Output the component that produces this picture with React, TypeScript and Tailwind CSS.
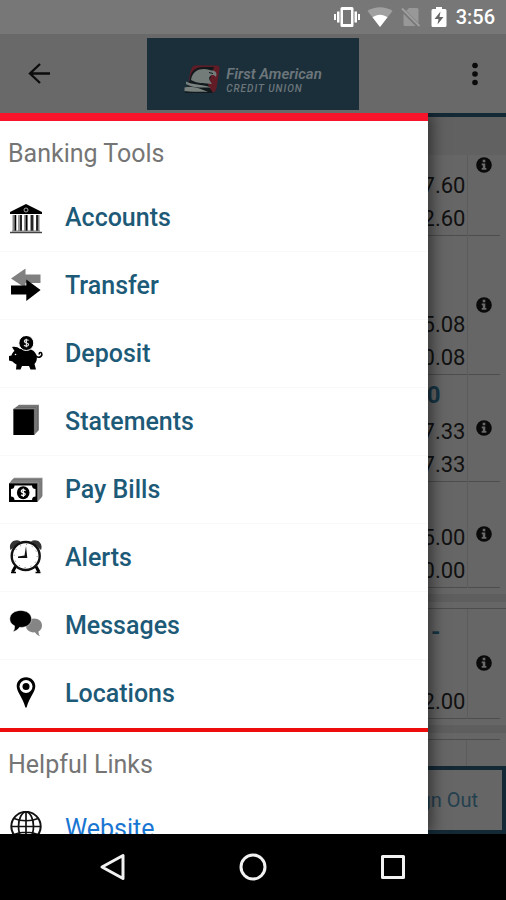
import type { ReactNode } from "react";

type MenuItem = {
  label: string;
  href: string;
  icon: ReactNode;
};

type AccountRow = {
  title: string;
  amounts: string[];
  size: string;
};

const tools: MenuItem[] = [
  {
    label: "Accounts",
    href: "#accounts",
    icon: (
      <svg viewBox="0 0 36 36" className="h-9 w-9">
        <path d="M18 4 L34 12 V14 H2 V12 Z" fill="#000" />
        <circle cx="18" cy="10" r="2" fill="none" stroke="#aaa" />
        <path d="M6 15V31M30 15V31" stroke="#888" strokeWidth="3" />
        <path d="M12 15V31M18 15V31M24 15V31" stroke="#999" strokeWidth="4" />
        <path d="M7.500 15V31M13 15V31M18.500 15V31M24 15V31M29 15V31" stroke="#000" strokeWidth="1.500" />
        <path d="M4 31H32" stroke="#777" strokeWidth="1" />
        <path d="M2 32.500H34" stroke="#444" strokeWidth="1.500" />
      </svg>
    ),
  },
  {
    label: "Transfer",
    href: "#transfer",
    icon: (
      <svg viewBox="0 0 36 36" className="h-9 w-9">
        <path d="M3 10.500 L17.500 0.500 V6.500 H32.500 V15 H17.500 V20 Z" fill="#808080" />
        <path d="M3 17.500 H18.300 V11.500 L32.600 22 L18.300 33 V26.500 H3 Z" fill="#000" />
      </svg>
    ),
  },
  {
    label: "Deposit",
    href: "#deposit",
    icon: (
      <svg viewBox="0 0 36 36" className="h-9 w-9">
        <path
          d="M4 11 C7 10.500 10 11 12 13 C18 11 26 12.500 28.500 19 C29.500 23 28.500 26 26.500 28 L28 33.500 H22.500 L21 30 H14 L12.500 33.500 H8 L8.500 28.500 C6.500 27.500 5.500 26.500 4.500 25.500 L1 24.500 V20 L3.500 19.500 C4 17.500 5 16 6.500 15 Z"
          fill="#000"
        />
        <path d="M28 20 C31 23 35 20 33.500 17 C32.500 15.500 30.500 17 31.500 18.500" fill="none" stroke="#000" strokeWidth="1.500" />
        <circle cx="18.300" cy="7" r="7.500" fill="#000" stroke="#fff" strokeWidth="1" />
        <path d="M20.500 4.500 C18.500 3 16 4 16.500 5.500 C17 7.500 20.500 6.500 20.500 8.500 C20.500 10.500 17.500 10.500 16 9.300 M18.400 2.800V11.200" fill="none" stroke="#ddd" strokeWidth="1.200" />
        <circle cx="7.500" cy="18.500" r="0.800" fill="#fff" />
      </svg>
    ),
  },
  {
    label: "Statements",
    href: "#statements",
    icon: (
      <svg viewBox="0 0 36 36" className="h-9 w-9">
        <path d="M5.300 5 L11 0.700 H31 V26 L26.300 31 V5 Z" fill="#858585" />
        <path d="M8 3.500H28V28M10 2H29.500V27" fill="none" stroke="#555" strokeWidth="0.600" />
        <rect x="5.300" y="5" width="21" height="26" fill="#000" />
        <path d="M5.500 31V5.200H26.300V31" fill="none" stroke="#666" strokeWidth="0.600" />
      </svg>
    ),
  },
  {
    label: "Pay Bills",
    href: "#pay-bills",
    icon: (
      <svg viewBox="0 0 36 36" className="h-9 w-9">
        <path d="M1 11.500 L6 5.700 H34.500 V24 L29.500 30 V11.500 Z" fill="#8a8a8a" />
        <path d="M3 9H32V27M4.500 7.500H33.300V25.500" fill="none" stroke="#666" strokeWidth="0.600" />
        <rect x="1" y="11.300" width="28.500" height="18.700" fill="#000" />
        <path d="M6.500 13.500 H24 C24 16 25.500 17 27.500 17 V24.500 C25.500 24.500 24 25.500 24 28 H6.500 C6.500 25.500 5 24.500 3 24.500 V17 C5 17 6.500 16 6.500 13.500 Z" fill="#fff" />
        <ellipse cx="15.200" cy="20.700" rx="6.300" ry="6.500" fill="#000" />
        <path d="M17.500 18.700 C15.500 17 13 18 13.300 19.500 C13.700 21 17.500 20.300 17.300 22.200 C17 24 14.300 23.800 13 22.800 M15.300 16.500V25" fill="none" stroke="#fff" strokeWidth="1.200" />
      </svg>
    ),
  },
  {
    label: "Alerts",
    href: "#alerts",
    icon: (
      <svg viewBox="0 0 36 36" className="h-9 w-9">
        <path d="M2.500 10 C0 3.500 6 -2 12.500 1.200 Z M33 10 C35.500 3.500 29.500 -2 23 1.200 Z" fill="#333" />
        <path d="M7.500 26.500 L4.500 32 M28 26.500 L31 32" stroke="#000" strokeWidth="3" />
        <path d="M3 32.500H8M27.500 32.500H32.500" stroke="#000" strokeWidth="1.500" />
        <circle cx="17.700" cy="16" r="14" fill="#fff" stroke="#111" strokeWidth="2.400" />
        <circle cx="17.700" cy="16" r="11.500" fill="none" stroke="#777" strokeWidth="1" strokeDasharray="1 5.020" />
        <path d="M18 6 L19.300 18 H10 L10 16.500 L16.500 15.500 Z" fill="#111" />
      </svg>
    ),
  },
  {
    label: "Messages",
    href: "#messages",
    icon: (
      <svg viewBox="0 0 36 36" className="h-9 w-9">
        <path d="M26 10.500 C31 10.500 34 13.500 34 17.500 C34 20.500 32.500 22.500 30.500 23.500 C30.500 25.500 31 27 32 28.200 C29.500 27.500 28 26 27 24.300 C22 25 18 22 18 17.800 C18 13.500 21.500 10.500 26 10.500 Z" fill="#858585" />
        <path d="M12.700 2.500 C19 2.500 23.500 6 23.500 11 C23.500 16.500 18 20 11.500 19.300 C10 21.500 8 23 5 23.800 C6.300 22 6.800 20 6.500 17.800 C3.500 16.500 1.800 14 1.800 11 C1.800 6 6.500 2.500 12.700 2.500 Z" fill="#000" stroke="#fff" strokeWidth="0.500" />
      </svg>
    ),
  },
  {
    label: "Locations",
    href: "#locations",
    icon: (
      <svg viewBox="0 0 36 36" className="h-9 w-9">
        <path d="M18 1.300 C23.500 1.300 27.300 5.300 27.300 10.300 C27.300 16 21.500 21 18.600 31.500 H17.400 C14.500 21 8.700 16 8.700 10.300 C8.700 5.300 12.500 1.300 18 1.300 Z" fill="#000" />
        <circle cx="18" cy="10.500" r="6.500" fill="#fff" />
        <circle cx="18" cy="10.500" r="3.500" fill="#000" />
      </svg>
    ),
  },
];

const links: MenuItem[] = [
  {
    label: "Website",
    href: "#website",
    icon: (
      <svg viewBox="0 0 36 36" className="h-9 w-9" fill="none" stroke="#111" strokeWidth="1.700">
        <circle cx="18" cy="15.500" r="14.700" strokeWidth="2" />
        <ellipse cx="18" cy="15.500" rx="7.500" ry="14.500" />
        <path d="M18 1V30M3.500 15.500H32.500M6 7.500C13 10.500 23 10.500 30 7.500M6 23.500C13 20.500 23 20.500 30 23.500" />
      </svg>
    ),
  },
];

const balances: AccountRow[] = [
  { title: "", amounts: ["7.60", "2.60"], size: "h-[139px]" },
  { title: "", amounts: ["5.08", "0.08"], size: "h-[139px]" },
  { title: "0", amounts: ["7.33", "7.33"], size: "h-[106px]" },
  { title: "", amounts: ["5.00", "0.00"], size: "h-[106px]" },
];

// the loan row keeps an empty line between its title and the balance
const loans: AccountRow[] = [{ title: "-", amounts: ["", "2.00"], size: "h-[110px]" }];

function InfoIcon() {
  return (
    <svg viewBox="0 0 16 16" className="h-4 w-4">
      <circle cx="8" cy="8" r="7.800" fill="#0a0a0a" />
      <path d="M6.700 2.800H9.300V5.200H6.700ZM5.700 6.500H9.300V11H10.400V12.800H5.700V11H6.800V8.200H5.700Z" fill="#6a6a6a" />
    </svg>
  );
}

function AccountTable({ rows }: { rows: AccountRow[] }) {
  return (
    <table className="w-full border-collapse">
      <tbody>
        {rows.map((row, i) => (
          <tr key={i} className={`border-b border-[#4d4d4d] ${row.size}`}>
            <td className="border-r border-[#5c5c5c] p-0 align-bottom">
              <div className="flex flex-col text-right text-[22px] leading-[33px] text-[#111]">
                {row.title && (
                  <span className="pr-[26px] text-2xl leading-10 font-bold text-[#173645]">{row.title}</span>
                )}
                {row.amounts.map((amount, n) => (
                  <span key={n} className="min-h-[33px] pr-px">
                    {amount}
                  </span>
                ))}
              </div>
            </td>
            <td className="w-[33px] p-0 align-middle">
              <button type="button" aria-label="Account details" className="flex w-full justify-center">
                <InfoIcon />
              </button>
            </td>
          </tr>
        ))}
      </tbody>
    </table>
  );
}

function StatusBar() {
  return (
    <div className="flex h-[34px] shrink-0 items-center justify-end bg-[#777] pr-[11px] text-white">
      <svg viewBox="0 0 28 22" className="mr-1.5 h-[22px] w-7" fill="#fff">
        <path d="M1 8H3V14H1ZM4 5.500H6.500V16.500H4ZM21.500 5.500H24V16.500H21.500ZM25 8H27V14H25Z" />
        <path fillRule="evenodd" d="M9 1H19Q20.500 1 20.500 2.500V19.500Q20.500 21 19 21H9Q7.500 21 7.500 19.500V2.500Q7.500 1 9 1ZM10 4V18H18V4Z" />
      </svg>
      <svg viewBox="0 0 26 22" className="mr-2 h-[22px] w-[26px]">
        <path d="M0.500 5 C8 0 18 0 25.500 5 L13 21 Z" fill="#a0a0a0" />
        <path d="M5.500 11.300 C10 7.800 16 7.800 20.500 11.300 L13 21 Z" fill="#fff" />
      </svg>
      <svg viewBox="0 0 20 22" className="mr-2.5 h-[22px] w-5">
        <path d="M8 2H16Q17.500 2 17.500 3.500V19Q17.500 20 16.500 20H4Q2.500 20 2.500 18.500V7.500Z" fill="#989898" />
        <path d="M1 3.500L18 20.500" stroke="#777" strokeWidth="4" />
        <path d="M1 2.500L18.500 20" stroke="#a0a0a0" strokeWidth="1.800" />
      </svg>
      <svg viewBox="0 0 16 22" className="mr-[9px] h-[22px] w-4">
        <path d="M5 1H11V3H14Q15.500 3 15.500 4.500V19.500Q15.500 21 14 21H2Q0.500 21 0.500 19.500V4.500Q0.500 3 2 3H5Z" fill="#fff" />
        <path d="M9.500 5.500L3.500 13H7.500L6.500 18.500L12.500 11H8.500Z" fill="#666" />
      </svg>
      <span className="text-xl leading-6 font-medium">3:56</span>
    </div>
  );
}

function Logo() {
  return (
    <div className="flex h-[72px] w-[212px] items-center justify-center gap-1 bg-[#1a2f3a] pt-3">
      <svg viewBox="0 0 38 30" className="h-[30px] w-[38px]">
        <path d="M11 0.500H33Q36 0.500 35.500 4L32.500 23Q31.500 28 27 28H6Q4 12 7 5Q8.500 0.500 11 0.500Z" fill="#611c26" />
        <path d="M6 15 C6 5 13 1.500 20 2 H30 L24 20 L29 28 H1 Z" fill="#12191c" />
        <path d="M7 15 C8 7 14 4 20 4 C24 4 26 5.500 28 5.500 C31.500 5.500 33.500 8 32 12 C30 9.800 28.500 9.800 27 10.500 C24 12 25 15 28 19 C21 18 14 19 7 15 Z" fill="#747c7a" />
        <path d="M2 16.500 C9 20.500 17 18.500 27 22.500 C19 22.500 9 23.500 2 19 Z M0.500 22.500 C8 20.500 16 23.500 24 27 C16 26 8 27.500 0.500 26 Z" fill="#7a8280" />
        <path d="M25 7.500L29 8.500" stroke="#12191c" />
      </svg>
      <div className="flex flex-col text-[#6d767b] italic">
        <span className="text-[15px] leading-[18px] font-semibold">First American</span>
        <span className="text-[10px] leading-3 font-medium tracking-widest">CREDIT UNION</span>
      </div>
    </div>
  );
}

function AppBar() {
  return (
    <header className="flex h-[79px] shrink-0 items-center justify-between bg-[#696969] px-6">
      <button type="button" aria-label="Back" className="flex w-[30px] justify-center">
        <svg viewBox="0 0 26 24" className="h-6 w-[26px]" fill="none" stroke="#0c0c0c" strokeWidth="2.300">
          <path d="M24 11.500H4M14 2L4 11.500L14 21" />
        </svg>
      </button>
      <Logo />
      <button type="button" aria-label="More options" className="flex w-[30px] justify-end pr-1">
        <svg viewBox="0 0 6 24" className="h-6 w-1.5" fill="#0a0a0a">
          <circle cx="3" cy="3.500" r="2.800" />
          <circle cx="3" cy="12" r="2.800" />
          <circle cx="3" cy="20.500" r="2.800" />
        </svg>
      </button>
    </header>
  );
}

function MenuSection({ title, items, tone }: { title: string; items: MenuItem[]; tone: string }) {
  return (
    <section>
      <h2 className="px-2 pt-[17px] pb-[15px] text-[25px] leading-[31px] text-[#757575]">{title}</h2>
      <ul>
        {items.map((item) => (
          <li key={item.label} className="border-b border-[#f9f9f9] last:border-transparent">
            <a href={item.href} className={`flex h-[67px] items-center gap-[21px] px-2 text-[25px] leading-8 ${tone}`}>
              {item.icon}
              {item.label}
            </a>
          </li>
        ))}
      </ul>
    </section>
  );
}

export default function App() {
  return (
    <div className="flex h-screen flex-col overflow-hidden bg-[#666] font-[Roboto,sans-serif]">
      <StatusBar />
      <AppBar />

      <main className="relative flex min-h-0 flex-1 flex-col overflow-hidden">
        <div className="h-[42px] shrink-0 border-t-4 border-[#142936] bg-[#616161]" />
        <div className="min-h-0 flex-1 overflow-hidden">
          <div className="-mt-[59px] pr-1.5">
            <AccountTable rows={balances} />
          </div>
          <div className="mt-1.5 mb-1.5 h-2 bg-[#5e5e5e]" />
          <div className="border-t border-[#4d4d4d] pr-1.5">
            <AccountTable rows={loans} />
          </div>
          <div className="mt-1.5 mb-1.5 h-2 bg-[#5e5e5e]" />
          <div className="mr-1.5 flex h-20 border-t border-[#4d4d4d]">
            <div className="flex-1 border-r border-[#5c5c5c]" />
            <div className="w-[33px]" />
          </div>
        </div>
        <button
          type="button"
          className="flex h-[68px] shrink-0 items-center justify-end border-4 border-[#142936] bg-[#666] pr-6 text-xl text-[#243f4e]"
        >
          Sign Out
        </button>

        {/* slide-in drawer, sits over the account list */}
        <nav className="absolute inset-y-0 left-0 w-[428px] max-w-[85%] overflow-hidden border-t-8 border-[#f8152b] bg-white shadow-[4px_0_14px_rgba(0,0,0,0.5)]">
          <MenuSection title="Banking Tools" items={tools} tone="font-medium text-[#1d5a78]" />
          <div className="h-1 bg-[#ee0c0c]" />
          <MenuSection title="Helpful Links" items={links} tone="text-[#1976d2]" />
        </nav>
      </main>

      <footer className="flex h-[66px] shrink-0 items-center justify-center gap-28 bg-black">
        <button type="button" aria-label="Navigate back">
          <svg viewBox="0 0 28 28" className="h-7 w-7" fill="none" stroke="#f2f2f2" strokeWidth="3" strokeLinejoin="round">
            <path d="M24 2.500V25.500L3 14Z" />
          </svg>
        </button>
        <button type="button" aria-label="Home">
          <svg viewBox="0 0 28 28" className="h-7 w-7" fill="none" stroke="#f2f2f2" strokeWidth="3">
            <circle cx="14" cy="14" r="12" />
          </svg>
        </button>
        <button type="button" aria-label="Recent apps">
          <svg viewBox="0 0 28 28" className="h-7 w-7" fill="none" stroke="#f2f2f2" strokeWidth="3" strokeLinejoin="round">
            <rect x="3.500" y="3.500" width="21" height="21" />
          </svg>
        </button>
      </footer>
    </div>
  );
}
